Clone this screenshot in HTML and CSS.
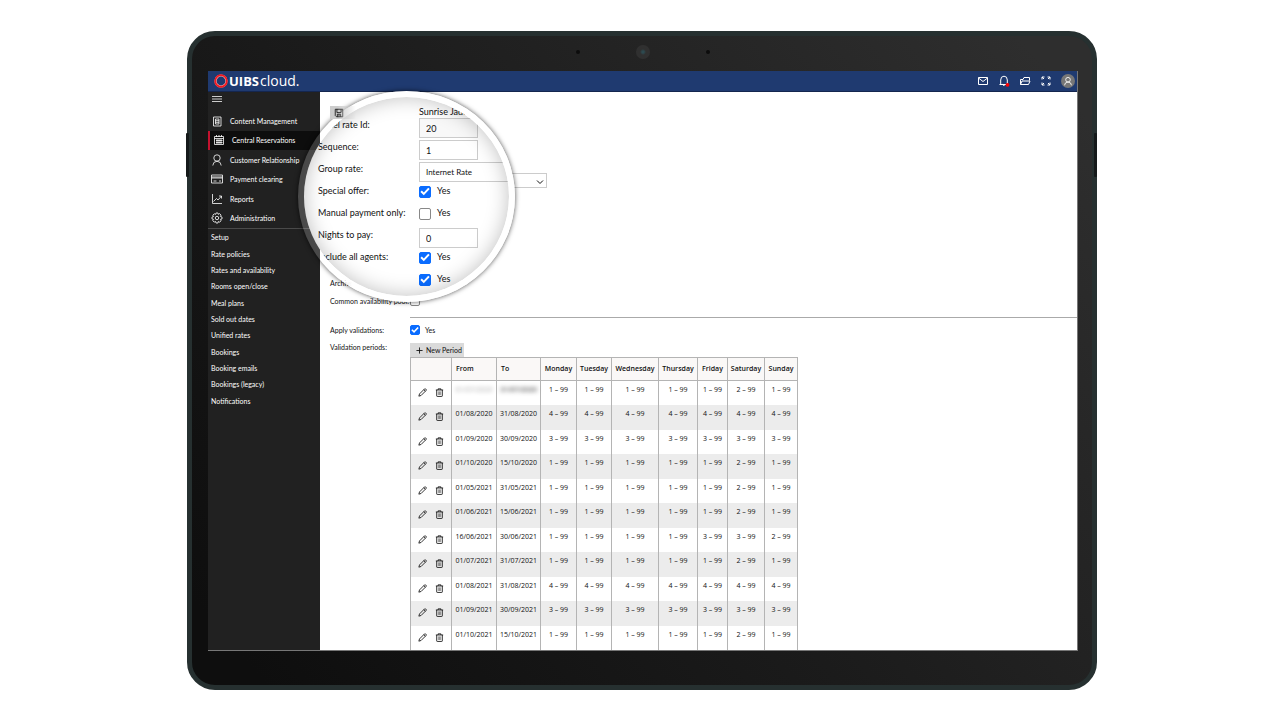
FILE: index.html
```html
<!DOCTYPE html>
<html lang="en">
<head>
<meta charset="utf-8">
<title>UIBScloud – Central Reservations</title>
<link rel="stylesheet" href="styles.css">
</head>
<body>
<svg class="defs" aria-hidden="true">
  <symbol id="pencil" viewBox="0 0 16 16"><path d="M1.500 14.500l1.200-4L11.500 1.700a1.500 1.500 0 0 1 2.100 0l.7.7a1.500 1.500 0 0 1 0 2.100L5.500 13.300zM10.300 3l2.700 2.700"/></symbol>
  <symbol id="trash" viewBox="0 0 16 16"><path d="M1.500 3.500h13M5.500 3.500v-2h5v2M3 3.500v10.500q0 1 1 1h8q1 0 1-1V3.500"/><path class="thin" d="M6 6v6.500M8 6v6.500M10 6v6.500"/></symbol>
</svg>
<div class="tablet">
  <i class="side-button side-left"></i><i class="side-button side-right"></i>
  <div class="camera-bar"><i class="mic"></i><i class="camera"></i><i class="mic"></i></div>
  <div class="screen">
    <header class="topbar">
      <a class="logo" href="#"><svg viewBox="0 0 14 14"><circle cx="7" cy="7" r="5.500" fill="none" stroke="#f8b0b0" stroke-width="2.200"/><circle cx="7" cy="7" r="5.800" fill="none" stroke="#f01820" stroke-width="1.800"/></svg><b>UIBS</b><span>cloud.</span></a>
      <nav class="tools">
        <button aria-label="Messages"><svg viewBox="0 0 12 12"><path d="M1.500 2.500h9v7h-9zM1.500 3l4.500 3.500L10.500 3"/></svg></button>
        <button aria-label="Notifications"><svg viewBox="0 0 12 12"><path d="M1.500 9.500h9M2.700 9.500V5a3.300 3.800 0 0 1 6.600 0v4.500M4.800 9.500q1.200 2.400 2.400 0"/><circle class="dot" cx="9.500" cy="9.800" r="1.900"/></svg></button>
        <button aria-label="Folders"><svg viewBox="0 0 12 12"><path d="M1.500 9.500v-5h2.500l1-2h5.500v3M1.500 9.500l1.500-3.500h8l-1.500 3.500z"/></svg></button>
        <button aria-label="Full screen"><svg viewBox="0 0 12 12"><path d="M2 4.500V2h2.500M7.500 2H10v2.500M10 7.500V10H7.500M4.500 10H2V7.500M2 2l2 2M10 2L8 4M10 10L8 8M2 10l2-2"/></svg></button>
        <button class="avatar" aria-label="Account"><svg viewBox="0 0 14 14"><circle cx="7" cy="5.500" r="2.700"/><path d="M3 12q0-3.500 4-3.800 4 .3 4 3.800"/></svg></button>
      </nav>
    </header>
    <div class="body">
      <aside class="sidebar">
        <button class="menu" aria-label="Menu"><svg viewBox="0 0 10 8"><path d="M0 1.500h10M0 4h10M0 6.500h10"/></svg></button>
        <nav class="primary">
          <a href="#"><svg viewBox="0 0 12 12"><path d="M2.500 2h7.500v9H2.500zM4.500 4h3.500v5H4.500zM4.500 5.700h3.500M4.500 7.300h3.500"/></svg>Content Management</a>
          <a href="#" class="active"><svg viewBox="0 0 12 12"><path d="M1.500 2.500h9v8h-9zM1.500 4.500h9M3.500 1v2M6 1v2M8.500 1v2M3 6.500h6.500M3 8.500h6.500M4 5v5M6 5v5M8 5v5"/></svg>Central Reservations</a>
          <a href="#"><svg viewBox="0 0 12 12"><circle cx="6" cy="4" r="3.200"/><path d="M1.800 11.500q.2-4 4.200-4.300 4 .3 4.200 4.300"/></svg>Customer Relationship</a>
          <a href="#"><svg viewBox="0 0 12 12"><path d="M.5 2h11v8H.5zM.5 4h11M.5 5h11M2.500 8h3M8 8h2"/></svg>Payment clearing</a>
          <a href="#"><svg viewBox="0 0 12 12"><path d="M1.500 1v9.500H11M2.500 8.500l3-3 1.500 1.500 3.500-4M8 3h2.500v2.500"/></svg>Reports</a>
          <a href="#"><svg viewBox="0 0 12 12"><circle cx="6" cy="6" r="1.700"/><path d="M5 1h2l.3 1.400 1.300-.8 1.500 1.500-.8 1.300L11 5v2l-1.500.3.600 1.500-1.400 1.300-1.400-.6L7 11H5l-.4-1.500-1.400.6-1.400-1.400.7-1.400L1 7V5l1.500-.4-.7-1.400 1.400-1.400 1.400.6z"/></svg>Administration</a>
        </nav>
        <nav class="secondary">
          <a href="#">Setup</a><a href="#">Rate policies</a><a href="#">Rates and availability</a><a href="#">Rooms open/close</a><a href="#">Meal plans</a><a href="#">Sold out dates</a><a href="#">Unified rates</a><a href="#">Bookings</a><a href="#">Booking emails</a><a href="#">Bookings (legacy)</a><a href="#">Notifications</a>
        </nav>
      </aside>
      <main class="content">
        <button class="save" aria-label="Save"><svg viewBox="0 0 12 12"><path d="M1.500 1.500h9v9H3l-1.500-1.500zM3.500 1.500v4h5v-4M4 10.500v-3h4v3M6 8v2"/></svg></button>
        <div class="select-wrap rate"><select aria-label="Rate group"><option></option></select><svg viewBox="0 0 8 8"><path d="M1 2.500l3 3 3-3"/></svg></div>
        <div class="row archive"><span>Archive:</span></div>
        <div class="row"><label for="pool">Common availability pool:</label><input type="checkbox" id="pool"></div>
        <hr>
        <div class="row"><span>Apply validations:</span><label class="check"><input type="checkbox" checked>Yes</label></div>
        <div class="row periods"><span>Validation periods:</span>
          <div>
            <button class="new"><svg viewBox="0 0 8 8"><path d="M4 .5v7M.5 4h7"/></svg>New Period</button>
            <table>
              <colgroup><col class="w41"><col class="w45"><col class="w44"><col class="w36"><col class="w35"><col class="w47"><col class="w39"><col class="w30"><col class="w37"><col class="w33"></colgroup>
              <thead><tr><th></th><th class="date">From</th><th class="date">To</th><th>Monday</th><th>Tuesday</th><th>Wednesday</th><th>Thursday</th><th>Friday</th><th>Saturday</th><th>Sunday</th></tr></thead>
              <tbody id="periods"></tbody>
            </table>
          </div>
        </div>
      </main>
    </div>
    <div class="lens">
      <div class="zoomed">
        <span class="title">Sunrise Jade</span>
        <label for="rid">Hotel rate Id:</label><input class="box shaded" id="rid" value="20">
        <label for="seq">Sequence:</label><input class="box" id="seq" value="1">
        <label for="grp">Group rate:</label><select class="box wide" id="grp"><option>Internet Rate</option></select>
        <span>Special offer:</span><label class="check"><input type="checkbox" checked>Yes</label>
        <span>Manual payment only:</span><label class="check"><input type="checkbox">Yes</label>
        <label for="nights">Nights to pay:</label><input class="box" id="nights" value="0">
        <span>Include all agents:</span><label class="check"><input type="checkbox" checked>Yes</label>
        <span></span><label class="check"><input type="checkbox" checked>Yes</label>
      </div>
    </div>
  </div>
</div>
<script src="script.js"></script>
</body>
</html>
```
FILE: styles.css
```css
* { box-sizing: border-box; }
body {
  margin: 0;
  min-height: 100vh;
  padding: 31px 183px 30px 187px;
  display: flex;
  background: #fff;
  font: 7px/10px Lato, "Open Sans", sans-serif;
  color: #111;
}
a { color: inherit; text-decoration: none; }
button, input, select { font: inherit; color: inherit; margin: 0; }
button { border: 0; padding: 0; background: none; display: flex; align-items: center; }
svg { fill: none; stroke: currentColor; display: block; flex: none; }
.defs { position: absolute; width: 0; height: 0; }

.tablet {
  position: relative;
  flex: 1;
  height: calc(100vh - 61px);
  display: flex;
  flex-direction: column;
  padding: 0 14px 34px 16px;
  border: 5px solid #263030;
  border-radius: 28px;
  background: linear-gradient(50deg, #0e0e0e 5%, #1b1b1b 45%, #2e2e2e 95%);
}
.side-button { position: absolute; top: 97px; width: 3px; height: 44px; background: #15191a; border-radius: 1px; }
.side-left { left: -6px; }
.side-right { right: -5px; }
.camera-bar { height: 35px; flex: none; display: flex; justify-content: center; align-items: center; gap: 56px; padding-bottom: 4px; }
.mic { width: 4px; height: 4px; border-radius: 50%; background: #0c0c0c; }
.camera { width: 14px; height: 14px; border-radius: 50%; background: radial-gradient(#2d4a50 1px, #303030 3px); }
.screen { position: relative; flex: 1; min-height: 0; overflow: hidden; display: flex; flex-direction: column; background: #fff; border-right: 1px solid #777; border-bottom: 1px solid #777; }

.topbar { height: 21px; flex: none; display: flex; justify-content: space-between; align-items: center; padding: 0 2px 0 6px; background: #1f3a70; border-bottom: 1px solid #14264f; color: #fff; }
.logo { display: flex; align-items: center; font-family: "Open Sans", sans-serif; font-size: 13px; line-height: 18px; }
.logo svg { width: 14px; height: 14px; margin-right: 1px; }
.logo span { font-size: 14px; margin-left: 1px; }
.tools { display: flex; align-items: center; gap: 9px; }
.tools svg { width: 12px; height: 12px; }
.tools .dot { fill: #f00; stroke: none; }
.tools .avatar { width: 14px; height: 14px; border-radius: 50%; background: #777; justify-content: center; }

.body { flex: 1; min-height: 0; display: flex; }
.sidebar { width: 112px; flex: none; background: #212121; color: #fff; }
.menu { height: 14px; margin-left: 4px; color: #ccc; }
.menu svg { width: 10px; height: 8px; }
.primary { display: flex; flex-direction: column; height: 118px; margin-top: 5px; border-bottom: 1px solid #4a4a4a; }
.primary a { flex: 1; display: flex; align-items: center; gap: 7px; padding: 0 0 0 3px; }
.primary svg { width: 12px; height: 12px; stroke-width: .8; }
.primary .active { border-left: 2px solid #c4122f; background: #0d0d0d; }
.secondary { display: flex; flex-direction: column; height: 180px; padding-left: 3px; }
.secondary a { flex: 1; display: flex; align-items: center; }

.content { flex: 1; min-width: 0; padding: 14px 0 0 10px; }
.save { position: relative; z-index: 2; width: 26px; height: 13px; padding-left: 4px; background: #ccc; mask-image: linear-gradient(to right, #000 30%, transparent); }
.save svg { width: 10px; height: 10px; }
.select-wrap { position: relative; }
.select-wrap select { width: 100%; height: 15px; border: 1px solid #ccc; background: #fff; appearance: none; display: block; }
.select-wrap svg { position: absolute; right: 3px; top: 5px; width: 8px; height: 8px; }
.rate { width: 137px; margin: 54px 0 86px 80px; }
.row { display: grid; grid-template-columns: 80px 1fr; height: 18px; align-items: center; white-space: nowrap; }
hr { margin: 7px 0 3px 80px; border: 0; border-top: 1px solid #aaa; }
.check { display: flex; align-items: center; gap: 5px; }
input[type=checkbox] { appearance: none; position: relative; width: 10px; height: 10px; border: 1px solid #888; border-radius: 2px; background: #fff; }
input[type=checkbox]:checked { background: #0a6cff; border-color: #0a6cff; }
input[type=checkbox]:checked::before { content: ""; position: absolute; inset: 0; background: #fff; clip-path: polygon(4% 54%, 18% 40%, 38% 60%, 82% 12%, 97% 26%, 38% 88%); }
.periods { align-items: start; height: auto; }
.periods > span { padding-top: 3px; }
.new { width: 54px; height: 14px; margin-top: 4px; padding-left: 6px; gap: 3px; background: #dadada; }
.new svg { width: 7px; height: 7px; }

table { width: 388px; table-layout: fixed; border-collapse: collapse; font-family: "Open Sans", sans-serif; }
.w41 { width: 41px; } .w45 { width: 45px; } .w44 { width: 44px; } .w36 { width: 36px; } .w35 { width: 35px; }
.w47 { width: 47px; } .w39 { width: 39px; } .w30 { width: 30px; } .w37 { width: 37px; } .w33 { width: 33px; }
th { height: 23px; padding: 0; border: 1px solid #b4b4b4; background: #faf8f7; font-weight: 600; text-align: center; }
th.date { text-align: left; padding-left: 4px; }
td { height: 24px; padding: 4px 0 0; border: solid #b4b4b4; border-width: 0 1px; text-align: center; vertical-align: top; white-space: nowrap; }
tbody tr:nth-child(even) td { height: 25px; background: #ececec; }
.actions { display: flex; justify-content: center; gap: 8px; padding-top: 3px; }
.actions svg { width: 9px; height: 9px; stroke-width: 1.500; }
.thin { stroke-width: .8; }
.hidden-date { filter: blur(2px); }
.faint { opacity: .4; }

.lens {
  position: absolute; left: 90px; top: 20px; width: 217px; height: 211px;
  border: 6px solid transparent; border-radius: 50%; overflow: hidden;
  background: linear-gradient(#fff, #fff) padding-box, linear-gradient(to right, rgba(255,255,255,.18) 24px, #fff 54px) border-box;
  box-shadow: 0 0 5px rgba(0,0,0,.7);
}
.lens::after { content: ""; position: absolute; inset: 0; border-radius: 50%; box-shadow: inset 0 0 20px rgba(0,0,0,.25); pointer-events: none; }
.zoomed { display: grid; grid-template-columns: 101px 1fr; grid-template-rows: 12px repeat(8, 22px); align-items: start; padding: 9px 0 0 14px; font-size: 9px; line-height: 14px; white-space: nowrap; }
.zoomed .title { grid-column: 2; line-height: 12px; }
.box { width: 59px; height: 20px; padding: 0 6px; border: 1px solid #ccc; background: #fff; appearance: none; border-radius: 0; }
.shaded { background: #f8f8f8; }
.wide { width: 110px; font-size: 8px; }
.zoomed .check { gap: 6px; }
.zoomed .check input { width: 12px; height: 12px; margin-top: 1px; }
```
FILE: script.js
```javascript
const rows = [
  ["01/07/2020", "31/07/2020", "1111121"],
  ["01/08/2020", "31/08/2020", "4444444"],
  ["01/09/2020", "30/09/2020", "3333333"],
  ["01/10/2020", "15/10/2020", "1111121"],
  ["01/05/2021", "31/05/2021", "1111121"],
  ["01/06/2021", "15/06/2021", "1111121"],
  ["16/06/2021", "30/06/2021", "1111332"],
  ["01/07/2021", "31/07/2021", "1111121"],
  ["01/08/2021", "31/08/2021", "4444444"],
  ["01/09/2021", "30/09/2021", "3333333"],
  ["01/10/2021", "15/10/2021", "1111121"]
];
const icon = (id, label) =>
  `<button aria-label="${label}"><svg><use href="#${id}"/></svg></button>`;
document.getElementById("periods").innerHTML = rows.map(([from, to, mins], i) => {
  const blur = i === 0 ? "hidden-date" : "";
  return `<tr><td><div class="actions">${icon("pencil", "Edit")}${icon("trash", "Delete")}</div></td>
    <td><div class="${blur} ${i === 0 ? "faint" : ""}">${from}</div></td><td><div class="${blur}">${to}</div></td>
    ${[...mins].map(n => `<td>${n} – 99</td>`).join("")}</tr>`;
}).join("");
```
